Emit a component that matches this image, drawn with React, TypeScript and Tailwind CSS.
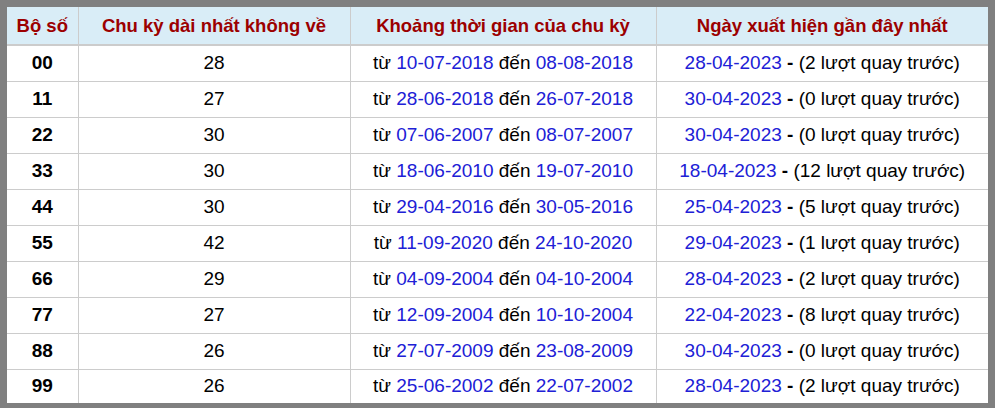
import React from "react";

const rows = [
  ["00", "28", "10-07-2018", "08-08-2018", "28-04-2023", "2"],
  ["11", "27", "28-06-2018", "26-07-2018", "30-04-2023", "0"],
  ["22", "30", "07-06-2007", "08-07-2007", "30-04-2023", "0"],
  ["33", "30", "18-06-2010", "19-07-2010", "18-04-2023", "12"],
  ["44", "30", "29-04-2016", "30-05-2016", "25-04-2023", "5"],
  ["55", "42", "11-09-2020", "24-10-2020", "29-04-2023", "1"],
  ["66", "29", "04-09-2004", "04-10-2004", "28-04-2023", "2"],
  ["77", "27", "12-09-2004", "10-10-2004", "22-04-2023", "8"],
  ["88", "26", "27-07-2009", "23-08-2009", "30-04-2023", "0"],
  ["99", "26", "25-06-2002", "22-07-2002", "28-04-2023", "2"],
];

export default function App() {
  return (
    <div className="w-[999px] h-[413px] bg-white" style={{ fontFamily: '"Liberation Sans", Arial, sans-serif' }}>
      <div className="w-[995px] border-[7px] border-b-[5px] border-[#808080] bg-white">
        <table className="w-full border-collapse table-fixed text-[19px] text-black">
          <colgroup>
            <col className="w-[71px]" />
            <col className="w-[272px]" />
            <col className="w-[306px]" />
            <col />
          </colgroup>
          <thead>
            <tr className="h-[38px] bg-[#d9edf7] text-[#9c0000] text-[18.5px]">
              <th className="border-r border-b-2 border-[#cccccc] font-bold">Bộ số</th>
              <th className="border-r border-b-2 border-[#cccccc] font-bold">Chu kỳ dài nhất không về</th>
              <th className="border-r border-b-2 border-[#cccccc] font-bold">Khoảng thời gian của chu kỳ</th>
              <th className="border-b-2 border-[#cccccc] font-bold">Ngày xuất hiện gần đây nhất</th>
            </tr>
          </thead>
          <tbody>
            {rows.map((r, i) => {
              const last = i === rows.length - 1;
              return (
                <tr key={r[0]} className={last ? "h-[34px]" : "h-[36px]"}>
                  <td className={`border-r border-[#cccccc] text-center font-bold ${last ? "" : "border-b"}`}>{r[0]}</td>
                  <td className={`border-r border-[#cccccc] text-center ${last ? "" : "border-b"}`}>{r[1]}</td>
                  <td className={`border-r border-[#cccccc] text-center ${last ? "" : "border-b"}`}>
                    từ <span className="text-[#2020d6]">{r[2]}</span> đến <span className="text-[#2020d6]">{r[3]}</span>
                  </td>
                  <td className={`border-[#cccccc] text-center ${last ? "" : "border-b"}`}>
                    <span className="text-[#2020d6]">{r[4]}</span> <b>-</b> ({r[5]} lượt quay trước)
                  </td>
                </tr>
              );
            })}
          </tbody>
        </table>
      </div>
    </div>
  );
}
